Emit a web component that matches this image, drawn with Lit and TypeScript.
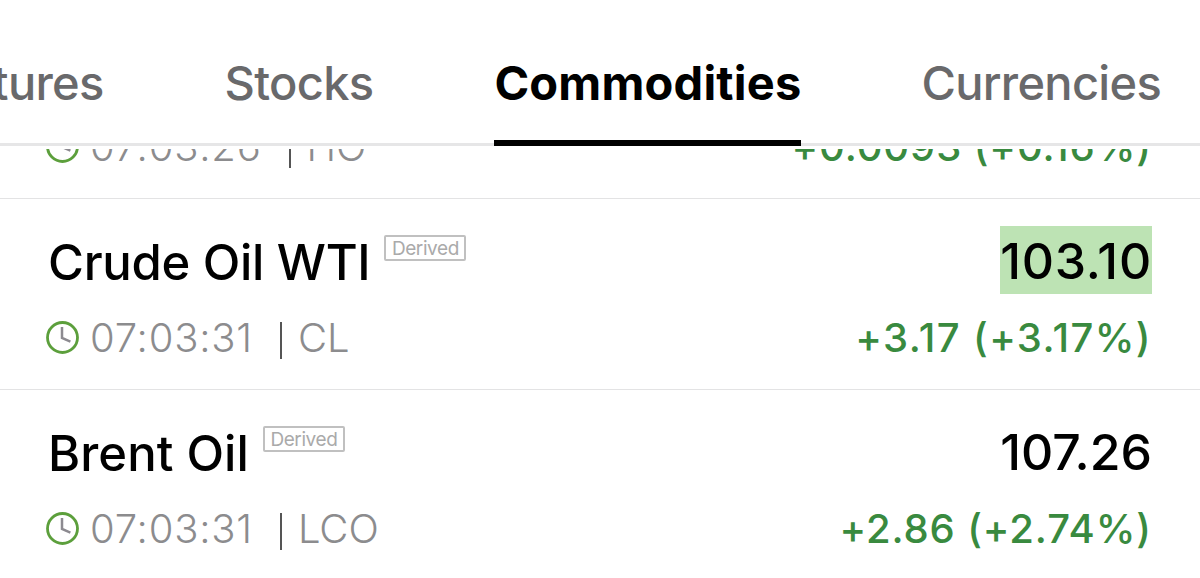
import {html, css, svg, LitElement} from 'lit';
import {customElement, property} from 'lit/decorators.js';
import {classMap} from 'lit/directives/class-map.js';

interface Quote {
  name: string;
  time: string;
  symbol: string;
  price: string;
  change: string;
  highlighted?: boolean;
}

const TABS = ['Futures', 'Stocks', 'Commodities', 'Currencies'];

const QUOTES: Quote[] = [
  { name: 'Heating Oil', time: '07:03:26', symbol: 'HO', price: '3.9570', change: '+0.0093 (+0.16%)' },
  { name: 'Crude Oil WTI', time: '07:03:31', symbol: 'CL', price: '103.10', change: '+3.17 (+3.17%)', highlighted: true },
  { name: 'Brent Oil', time: '07:03:31', symbol: 'LCO', price: '107.26', change: '+2.86 (+2.74%)' },
];

@customElement('market-tabs')
export class MarketTabs extends LitElement {
  @property()
  active: string = '';

  static styles = css`
    :host {
      display: block;
    }

    .tabs {
      display: flex;
      justify-content: flex-end;
      gap: 121px;
      height: 146px;
      padding-right: 39px;
      box-sizing: border-box;
      box-shadow: inset 0 -3px #e6e6e7;
      overflow: hidden;
    }

    .tab {
      flex: none;
      height: 146px;
      box-sizing: border-box;
      padding-top: 54px;
      font-size: 47px;
      line-height: 57px;
      font-weight: 500;
      letter-spacing: -0.7px;
      color: #69696b;
      white-space: nowrap;
    }

    .tab--active {
      margin-right: -1px;
      border-bottom: 6px solid #000;
      font-weight: 700;
      letter-spacing: 0.2px;
      color: #000;
    }
  `;

  render() {
    return html`
      <nav class="tabs">
        ${TABS.map(tab => html`
          <div class=${classMap({ "tab": true, "tab--active": tab === this.active })}>${tab}</div>
        `)}
      </nav>
    `;
  }
}

@customElement('quote-row')
export class QuoteRow extends LitElement {
  @property({ attribute: false })
  quote!: Quote;

  static styles = css`
    :host {
      display: block;
    }

    .row {
      display: flex;
      justify-content: space-between;
      height: 191px;
      box-sizing: border-box;
      padding: 27px 48px 0 46px;
      border-bottom: 1px solid #e3e3e4;
      white-space: nowrap;
    }

    .title {
      display: flex;
      align-items: flex-start;
      height: 78px;
      padding-left: 2px;
    }

    .name {
      padding-top: 7px;
      font-size: 49px;
      line-height: 60px;
      font-weight: 500;
      letter-spacing: 0.05px;
      color: #000;
    }

    .badge {
      box-sizing: border-box;
      width: 82px;
      height: 26px;
      margin: 9px 0 0 14px;
      border: 2px solid #c0c0c0;
      border-radius: 2px;
      font-size: 19px;
      line-height: 23px;
      letter-spacing: -0.4px;
      text-align: center;
      color: #aaa;
    }

    .meta {
      display: flex;
      align-items: center;
      height: 68px;
      font-size: 40px;
      font-weight: 300;
      color: #8c8c8e;
    }

    .clock {
      display: block;
      width: 33px;
      height: 33px;
      margin: -1px 11px 0 0;
    }

    .time {
      margin-top: -1px;
      letter-spacing: 0.8px;
    }

    .divider {
      width: 2px;
      height: 37px;
      margin: 4px 16px 0 27px;
      background-color: #555;
    }

    .symbol {
      margin-top: -1px;
    }

    .values {
      display: flex;
      flex-direction: column;
      align-items: flex-end;
      font-feature-settings: "calt" 0;
    }

    .price {
      height: 68px;
      margin-bottom: 10px;
      font-size: 50px;
      line-height: 71px;
      font-weight: 500;
      letter-spacing: 0;
      color: #000;
    }

    .change {
      height: 68px;
      font-size: 40px;
      line-height: 68px;
      font-weight: 500;
      letter-spacing: 0.9px;
      color: #398a3f;
    }

    .row--highlighted .name {
      letter-spacing: -0.3px;
    }

    .row--highlighted .price {
      letter-spacing: 0.8px;
      background-color: #bde3b4;
    }

    .row--highlighted .change {
      letter-spacing: 1.4px;
    }
  `;

  renderClock() {
    return svg`
      <svg class="clock" viewBox="0 0 33 33" fill="none" stroke-width="2.8">
        <circle cx="16.5" cy="16.5" r="15" stroke="#5c9f3c"/>
        <path d="M16 6v11l8.4 3.6" stroke="#8c8a90" stroke-width="2.5"/>
      </svg>
    `;
  }

  render() {
    const { name, time, symbol, price, change, highlighted } = this.quote;
    return html`
      <div class=${classMap({ "row": true, "row--highlighted": !!highlighted })}>
        <div>
          <div class="title">
            <span class="name">${name}</span>
            <span class="badge">Derived</span>
          </div>
          <div class="meta">
            ${this.renderClock()}
            <span class="time">${time}</span>
            <span class="divider"></span>
            <span class="symbol">${symbol}</span>
          </div>
        </div>
        <div class="values">
          <span class="price">${price}</span>
          <span class="change">${change}</span>
        </div>
      </div>
    `;
  }
}

@customElement('app-root')
export class AppRoot extends LitElement {
  static styles = css`
    :host {
      display: flex;
      flex-direction: column;
      width: 1200px;
      height: 578px;
      overflow: hidden;
      background-color: #fff;
      font-family: Inter, "Liberation Sans", sans-serif;
    }

    /* The list is scrolled so that its first row sits partly under the tabs */
    .list {
      display: flex;
      flex-direction: column;
      justify-content: flex-end;
      height: 432px;
      box-sizing: border-box;
      margin-top: 3px;
      overflow: hidden;
    }

    .rows {
      flex: none;
      margin-bottom: -3px;
    }
  `;

  render() {
    return html`
      <market-tabs active="Commodities"></market-tabs>
      <main class="list">
        <div class="rows">
          ${QUOTES.map(quote => html`<quote-row .quote=${quote}></quote-row>`)}
        </div>
      </main>
    `;
  }
}

declare global {
  interface HTMLElementTagNameMap {
    'market-tabs': MarketTabs;
    'quote-row': QuoteRow;
    'app-root': AppRoot;
  }
}
